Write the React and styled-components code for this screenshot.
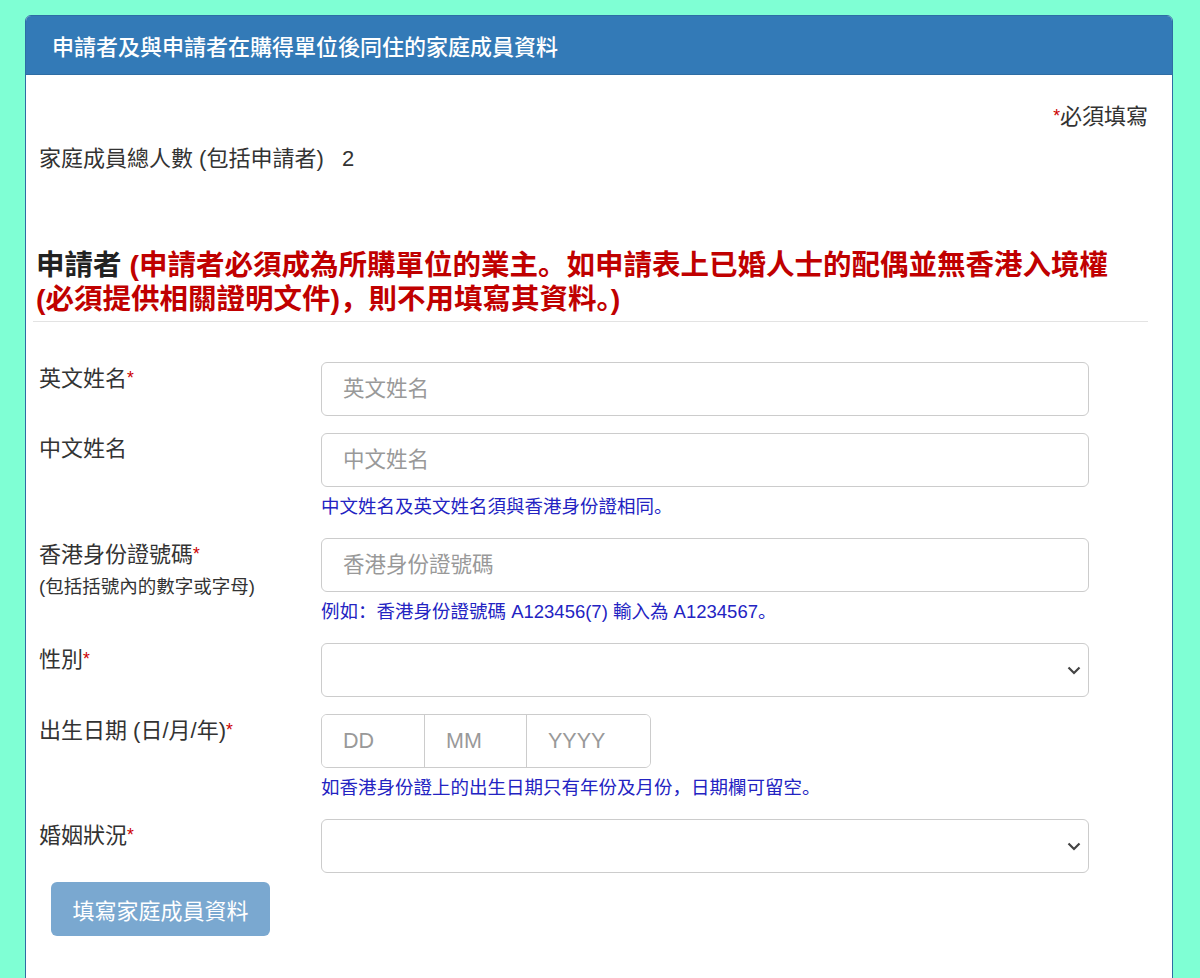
import React from 'react';
import styled, { createGlobalStyle } from 'styled-components';

const FONT = '"Liberation Sans", "Noto Sans CJK SC", sans-serif';

const GlobalStyle = createGlobalStyle`
  html, body {
    margin: 0;
    padding: 0;
    background: #7fffd4;
  }
  body {
    font-family: ${FONT};
    color: #333;
  }
  * {
    box-sizing: border-box;
  }
`;

const Page = styled.div`
  padding: 15px 27px 0 25px;
  min-height: 978px;
`;

const Panel = styled.div`
  background: #fff;
  border: 1px solid #2e6da4;
  border-radius: 6px 6px 0 0;
  min-height: 1000px;
  overflow: hidden;
`;

const PanelHeading = styled.div`
  background: #337ab7;
  color: #fff;
  height: 59px;
  padding: 0 26px;
  display: flex;
  align-items: center;
  font-size: 22px;
  font-weight: 500;
  border-bottom: 1px solid #2e6da4;
`;

const PanelBody = styled.div`
  padding: 25px 24px 40px 13px;
`;

const RequiredNote = styled.div`
  text-align: right;
  font-size: 22px;
  line-height: 32px;
  margin-bottom: 10px;
`;

const Star = styled.span`
  color: #c00;
  font-size: 0.8em;
  vertical-align: 2px;
`;

const Summary = styled.div`
  font-size: 22px;
  line-height: 32px;
  margin-bottom: 73px;
  white-space: pre;
`;

const SectionTitle = styled.h3`
  margin: 0 0 0 -3px;
  font-size: 28.5px;
  line-height: 34px;
  font-weight: bold;
  color: #222;
  max-width: 1085px;
`;

const Warn = styled.span`
  color: #c00000;
`;

const Rule = styled.hr`
  border: 0;
  border-top: 1px solid #e3e3e3;
  margin: 5px 0 40px -6px;
`;

const FormGroup = styled.div`
  display: grid;
  grid-template-columns: 282px 768px;
  margin-bottom: ${(p) => (p.last ? '9px' : '17px')};
`;

const Label = styled.div`
  font-size: 22px;
  line-height: 32px;
`;

const SubLabel = styled.div`
  font-size: 18.5px;
  line-height: 32px;
`;

const Field = styled.div`
  position: relative;
`;

const TextInput = styled.input`
  display: block;
  width: 100%;
  height: 54px;
  padding: 0 21px;
  font-family: ${FONT};
  font-size: 21.5px;
  color: #555;
  background: #fff;
  border: 1px solid #ccc;
  border-radius: 6px;
  outline: none;

  &::placeholder {
    color: #999;
  }
`;

const Select = styled.select`
  display: block;
  width: 100%;
  height: 54px;
  padding: 0 21px;
  font-family: ${FONT};
  font-size: 21.5px;
  color: #555;
  background: #fff;
  border: 1px solid #ccc;
  border-radius: 6px;
  appearance: none;
  outline: none;
`;

const Caret = styled.svg`
  position: absolute;
  right: 8px;
  top: 23px;
  width: 14px;
  height: 9px;
  pointer-events: none;
`;

const Help = styled.div`
  margin-top: 5px;
  font-size: 18.5px;
  line-height: 29px;
  color: #2323c2;
`;

const DateGroup = styled.div`
  display: flex;
  width: 330px;
  height: 54px;
  border: 1px solid #ccc;
  border-radius: 6px;
  overflow: hidden;
`;

const DatePart = styled.input`
  width: ${(p) => p.w}px;
  height: 100%;
  border: 0;
  border-left: ${(p) => (p.first ? '0' : '1px solid #ccc')};
  padding: 0 21px;
  font-family: ${FONT};
  font-size: 21.5px;
  color: #555;
  outline: none;
  background: #fff;

  &::placeholder {
    color: #999;
  }
`;

const SubmitButton = styled.button`
  margin-left: 12px;
  width: 219px;
  height: 54px;
  border: 0;
  border-radius: 6px;
  background: #7aa8d0;
  color: #fff;
  font-family: ${FONT};
  font-size: 22px;
  cursor: not-allowed;
`;

function SelectField() {
  return (
    <Field>
      <Select defaultValue="">
        <option value="" />
      </Select>
      <Caret viewBox="0 0 14 9">
        <path d="M1.5 1.5 7 7l5.5-5.5" fill="none" stroke="#444" strokeWidth="2.2" />
      </Caret>
    </Field>
  );
}

export default function App() {
  return (
    <Page>
      <GlobalStyle />
      <Panel>
        <PanelHeading>申請者及與申請者在購得單位後同住的家庭成員資料</PanelHeading>
        <PanelBody>
          <RequiredNote>
            <Star>*</Star>必須填寫
          </RequiredNote>
          <Summary>家庭成員總人數 (包括申請者)   2</Summary>

          <SectionTitle>
            申請者{' '}
            <Warn>
              (申請者必須成為所購單位的業主。如申請表上已婚人士的配偶並無香港入境權(必須提供相關證明文件)，則不用填寫其資料。)
            </Warn>
          </SectionTitle>
          <Rule />

          <FormGroup>
            <Label>
              英文姓名<Star>*</Star>
            </Label>
            <Field>
              <TextInput placeholder="英文姓名" />
            </Field>
          </FormGroup>

          <FormGroup>
            <Label>中文姓名</Label>
            <Field>
              <TextInput placeholder="中文姓名" />
              <Help>中文姓名及英文姓名須與香港身份證相同。</Help>
            </Field>
          </FormGroup>

          <FormGroup>
            <div>
              <Label>
                香港身份證號碼<Star>*</Star>
              </Label>
              <SubLabel>(包括括號內的數字或字母)</SubLabel>
            </div>
            <Field>
              <TextInput placeholder="香港身份證號碼" />
              <Help>例如：香港身份證號碼 A123456(7) 輸入為 A1234567。</Help>
            </Field>
          </FormGroup>

          <FormGroup>
            <Label>
              性別<Star>*</Star>
            </Label>
            <SelectField />
          </FormGroup>

          <FormGroup>
            <Label>
              出生日期 (日/月/年)<Star>*</Star>
            </Label>
            <Field>
              <DateGroup>
                <DatePart first w={102} placeholder="DD" />
                <DatePart w={102} placeholder="MM" />
                <DatePart w={126} placeholder="YYYY" />
              </DateGroup>
              <Help>如香港身份證上的出生日期只有年份及月份，日期欄可留空。</Help>
            </Field>
          </FormGroup>

          <FormGroup last>
            <Label>
              婚姻狀況<Star>*</Star>
            </Label>
            <SelectField />
          </FormGroup>

          <SubmitButton disabled>填寫家庭成員資料</SubmitButton>
        </PanelBody>
      </Panel>
    </Page>
  );
}
